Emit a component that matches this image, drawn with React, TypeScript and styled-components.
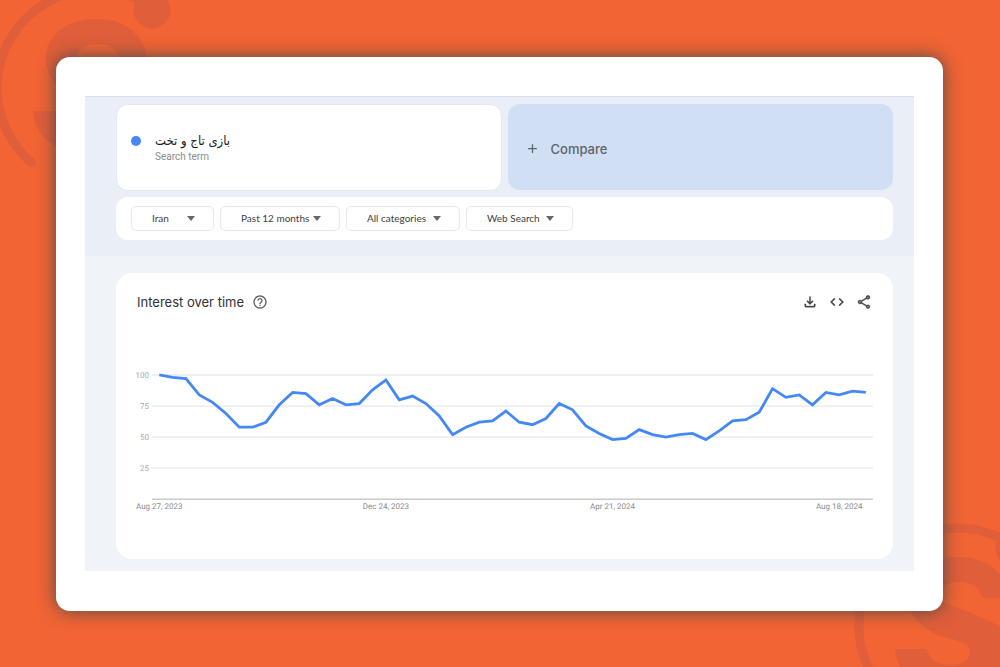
import React from "react";
import styled, { createGlobalStyle } from "styled-components";
import {
  MdAdd,
  MdCode,
  MdHelpOutline,
  MdOutlineFileDownload,
  MdOutlineShare,
} from "react-icons/md";

const GlobalStyle = createGlobalStyle`
  *, *::before, *::after { box-sizing: border-box; }
  body {
    margin: 0;
    background: #f26434;
    font-family: Inter, "Liberation Sans", sans-serif;
    color: #3c4043;
  }
`;

const Page = styled.div`
  position: relative;
  min-height: 100vh;
  padding: 57px 57px 56px 56px;
  overflow: hidden;
`;

const EmblemSvg = styled.svg<{ $corner: "start" | "end" }>`
  position: absolute;
  width: 220px;
  height: 220px;
  color: #e05e39;
  ${(p) =>
    p.$corner === "start"
      ? "left: -15px; top: -22px;"
      : "right: -67px; bottom: -69px;"}
`;

const Frame = styled.main`
  position: relative;
  padding: 39px 29px 40px;
  border-radius: 14px;
  background: #fff;
  box-shadow: 0 0 18px rgba(60, 70, 75, 0.9);
`;

const Explore = styled.div`
  background: #f0f3f8;
`;

const SearchArea = styled.section`
  display: flex;
  flex-direction: column;
  gap: 6px;
  padding: 7px 21px 16px 31px;
  border-top: 1px solid #d8deea;
  background: #e9eef7;
`;

const Terms = styled.div`
  display: grid;
  grid-template-columns: 1fr 1fr;
  gap: 6px;
`;

const TermCard = styled.div`
  display: grid;
  grid-template-columns: 10px max-content;
  align-content: center;
  align-items: center;
  column-gap: 14px;
  height: 87px;
  padding: 1px 14px 0;
  border: 1px solid #e4e8ef;
  border-radius: 12px;
  background: #fff;
`;

const Dot = styled.span`
  width: 10px;
  height: 10px;
  border-radius: 50%;
  background: #4689f5;
`;

const TermName = styled.span`
  font: 13px/18px "DejaVu Sans Condensed", "DejaVu Sans", sans-serif;
  color: #202124;
`;

const TermKind = styled.span`
  grid-column: 2;
  font: 10px/14px Roboto, sans-serif;
  color: #8a8d91;
`;

const CompareButton = styled.button`
  display: flex;
  align-items: center;
  gap: 11px;
  height: 86px;
  padding: 3px 17px 0;
  border: 0;
  border-radius: 12px;
  background: #d1dff4;
  color: #5f6368;
  font: 500 13px/16px Inter, sans-serif;
`;

const Filters = styled.div`
  display: flex;
  gap: 6px;
  padding: 9px 15px;
  border-radius: 12px;
  background: #fff;
`;

const FilterBox = styled.label<{ $width: number }>`
  display: grid;
  align-items: center;
  width: ${(p) => p.$width}px;
`;

const FilterSelect = styled.select`
  grid-area: 1 / 1;
  width: 100%;
  height: 25px;
  padding: 0 0 1px 20px;
  appearance: none;
  border: 1px solid #e6e8eb;
  border-radius: 5px;
  background: #fff;
  color: #3c4043;
  font: 10px/14px Lato, sans-serif;
`;

const Caret = styled.span`
  grid-area: 1 / 1;
  justify-self: end;
  margin-right: 19px;
  border: 4px solid transparent;
  border-top: 5px solid #666;
  border-bottom: 0;
  pointer-events: none;
`;

const ResultArea = styled.section`
  padding: 17px 21px 12px 31px;
`;

const ChartCard = styled.article`
  padding: 20px 20px 46px;
  border-radius: 16px;
  background: #fff;
`;

const ChartHeader = styled.header`
  display: flex;
  align-items: center;
  justify-content: space-between;
  height: 18px;
  margin-bottom: 49px;
  padding: 0 1px;
`;

const TitleGroup = styled.div`
  display: flex;
  align-items: center;
  gap: 8px;
`;

const Title = styled.h2`
  margin: 0;
  font-size: 13px;
  font-weight: 400;
  line-height: 18px;
  color: #303134;
`;

const IconButton = styled.button`
  display: flex;
  padding: 0;
  border: 0;
  background: none;
  color: #5f6368;
  font-size: 16px;
`;

const Actions = styled.div`
  display: flex;
  gap: 11px;

  ${IconButton} {
    color: #444746;
  }

  path:not([fill="none"]) {
    stroke-width: 0.5px;
  }
`;

const ChartSvg = styled.svg`
  display: block;
  width: 100%;
  font-family: Roboto, sans-serif;
  font-size: 8px;
  text-rendering: geometricPrecision;
`;

const filters = [
  { name: "Location", value: "Iran", width: 83 },
  { name: "Time range", value: "Past 12 months", width: 120 },
  { name: "Category", value: "All categories", width: 114 },
  { name: "Search type", value: "Web Search", width: 107 },
];

const interest = [
  100, 98, 97, 84, 78, 69, 58, 58, 62, 76, 86, 85, 76, 81, 76, 77, 88, 96, 80,
  83, 77, 67, 52, 58, 62, 63, 71, 62, 60, 65, 77, 72, 59, 53, 48, 49, 56, 52,
  50, 52, 53, 48, 55, 63, 64, 70, 89, 82, 84, 76, 86, 84, 87, 86,
];

const dates = [
  { week: 0, label: "Aug 27, 2023" },
  { week: 17, label: "Dec 24, 2023" },
  { week: 34, label: "Apr 21, 2024" },
  { week: 51, label: "Aug 18, 2024" },
];

const weekX = (week: number) => 23.3 + week * 13.35;
const valueY = (value: number) => 139.5 - value * 1.245;

function Emblem({ corner }: { corner: "start" | "end" }) {
  return (
    <EmblemSvg $corner={corner} viewBox="-110 -110 220 220" aria-hidden="true">
      <path
        d="M57-79.7A98 98 0 0 0-98 0A98 98 0 0 0-64 74.2"
        fill="none"
        stroke="currentColor"
        strokeWidth="9"
        strokeLinecap="round"
      />
      <circle cx="57" cy="-78" r="18.5" fill="currentColor" />
      <path
        d="M-62 23H-31C-27 34-19 39-6 39C6 39 13 34 13 26C13 16 2 15-20 9C-38 0-49-12-49-30C-49-52-29-69 2-69C31-69 50-52 52-28H25C23-39 15-44 3-44C-8-44-18-40-18-32C-18-22 2-19 16-12C42-1 59 6 59 28C59 52 35 66 0 66C-36 66-60 52-62 23Z"
        fill="currentColor"
      />
    </EmblemSvg>
  );
}

function InterestChart() {
  const points = interest.map((v, i) => `${weekX(i)},${valueY(v)}`).join(" ");
  return (
    <ChartSvg viewBox="0 0 738 153" role="img" aria-label="Interest over time">
      {[25, 50, 75, 100].map((v) => (
        <g key={v}>
          <line x1="16" x2="738" y1={valueY(v)} y2={valueY(v)} stroke="#efefef" strokeWidth="1.8" />
          <text x="13" y={valueY(v) + 3} textAnchor="end" fill="#a8a8a8">
            {v}
          </text>
        </g>
      ))}
      <line x1="16" x2="738" y1="139.5" y2="139.5" stroke="#cacaca" strokeWidth="1.6" />
      <polyline points={points} fill="none" stroke="#4488f7" strokeWidth="2.8" />
      {dates.map((d) => (
        <text key={d.label} x={weekX(d.week)} y="149" textAnchor="middle" fill="#8a8a8a">
          {d.label}
        </text>
      ))}
    </ChartSvg>
  );
}

export default function App() {
  return (
    <Page>
      <GlobalStyle />
      <Emblem corner="start" />
      <Emblem corner="end" />
      <Frame>
        <Explore>
          <SearchArea>
            <Terms>
              <TermCard>
                <Dot />
                <TermName lang="fa" dir="rtl">بازی تاج و تخت</TermName>
                <TermKind>Search term</TermKind>
              </TermCard>
              <CompareButton type="button">
                <MdAdd size={15} />
                Compare
              </CompareButton>
            </Terms>
            <Filters>
              {filters.map((f) => (
                <FilterBox key={f.name} $width={f.width}>
                  <FilterSelect aria-label={f.name}>
                    <option>{f.value}</option>
                  </FilterSelect>
                  <Caret />
                </FilterBox>
              ))}
            </Filters>
          </SearchArea>
          <ResultArea>
            <ChartCard>
              <ChartHeader>
                <TitleGroup>
                  <Title>Interest over time</Title>
                  <IconButton type="button" aria-label="Help">
                    <MdHelpOutline />
                  </IconButton>
                </TitleGroup>
                <Actions>
                  <IconButton type="button" aria-label="Download">
                    <MdOutlineFileDownload />
                  </IconButton>
                  <IconButton type="button" aria-label="Embed">
                    <MdCode />
                  </IconButton>
                  <IconButton type="button" aria-label="Share">
                    <MdOutlineShare />
                  </IconButton>
                </Actions>
              </ChartHeader>
              <InterestChart />
            </ChartCard>
          </ResultArea>
        </Explore>
      </Frame>
    </Page>
  );
}
